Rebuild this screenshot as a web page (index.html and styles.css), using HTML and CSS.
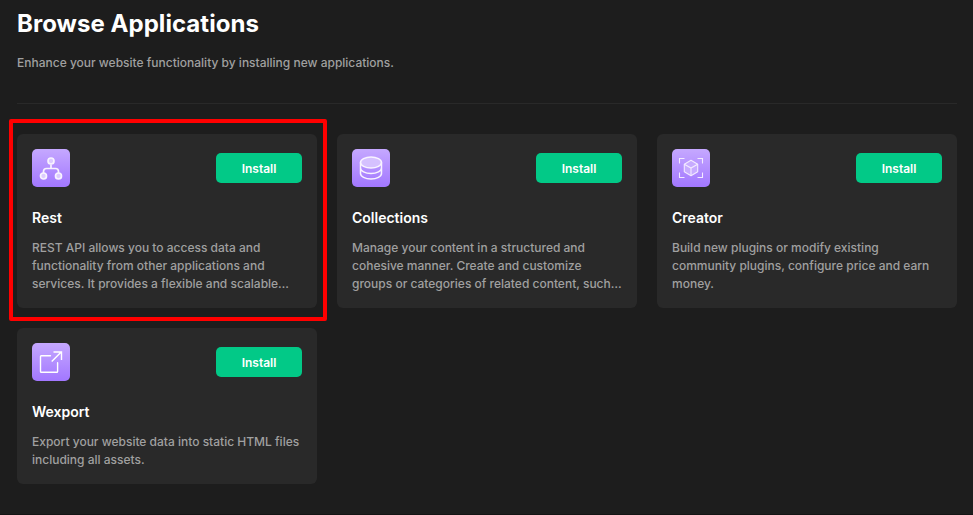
FILE: index.html
```html
<!DOCTYPE html>
<html lang="en">
<head>
<meta charset="utf-8">
<title>Browse Applications</title>
<link rel="stylesheet" href="styles.css">
</head>
<body>
<main class="page">
  <header class="header">
    <h1 class="heading">Browse Applications</h1>
    <p class="lead">Enhance your website functionality by installing new applications.</p>
  </header>
  <section class="grid">
    <article class="card highlighted">
      <div class="top">
        <svg class="icon" viewBox="0 0 38 38"><g fill="#dccbff" stroke="#f8f3ff" stroke-width="1.7"><path fill="none" d="M19 15.500v4M11.500 24.500v-2q0-3 3-3h9q3 0 3 3v2"/><circle cx="19" cy="12" r="3"/><circle cx="11.500" cy="27" r="3"/><circle cx="26.500" cy="27" r="3"/></g></svg>
        <button class="install">Install</button>
      </div>
      <h2 class="name">Rest</h2>
      <p class="desc">REST API allows you to access data and<br>functionality from other applications and<br>services. It provides a flexible and scalable…</p>
    </article>
    <article class="card">
      <div class="top">
        <svg class="icon" viewBox="0 0 38 38"><g fill="none" stroke="#f8f3ff" stroke-width="1.500"><ellipse fill="#d5c1ff" cx="19" cy="13.500" rx="10.500" ry="5.500"/><path d="M8.500 13.500v11c0 3 4.700 5.500 10.500 5.500s10.500-2.500 10.500-5.500v-11M8.500 19c0 3 4.700 5.500 10.500 5.500s10.500-2.500 10.500-5.500"/></g></svg>
        <button class="install">Install</button>
      </div>
      <h2 class="name">Collections</h2>
      <p class="desc">Manage your content in a structured and<br>cohesive manner. Create and customize<br>groups or categories of related content, such…</p>
    </article>
    <article class="card">
      <div class="top">
        <svg class="icon" viewBox="0 0 38 38"><g fill="none" stroke="#f3eaff" stroke-width="1.100"><path d="M12.500 9.500h-5v5M25.500 9.500h5v5M7.500 23.500v5h5M30.500 23.500v5h-5"/><path fill="#c7abff" stroke-linejoin="round" d="M19 11.300l6.700 3.900v7.600L19 26.700l-6.700-3.900v-7.600z"/><path d="M12.300 15.200l6.700 3.900 6.700-3.900M19 19.100v7.600"/></g></svg>
        <button class="install">Install</button>
      </div>
      <h2 class="name">Creator</h2>
      <p class="desc">Build new plugins or modify existing<br>community plugins, configure price and earn<br>money.</p>
    </article>
    <article class="card">
      <div class="top">
        <svg class="icon" viewBox="0 0 38 38"><g fill="none" stroke="#fff" stroke-width="1.400"><path stroke-linecap="round" stroke-linejoin="round" d="M18.500 12.700H9.300q-.8 0-.8.800v15q0 .8.800.8h15.500q.8 0 .8-.8v-8.800"/><path d="M19.700 18.400l9.500-9.500M21.500 9h8v8"/></g></svg>
        <button class="install">Install</button>
      </div>
      <h2 class="name">Wexport</h2>
      <p class="desc">Export your website data into static HTML files<br>including all assets.</p>
    </article>
  </section>
</main>
</body>
</html>
```
FILE: styles.css
```css
* { box-sizing: border-box; }
body {
  margin: 0;
  background: #1d1d1d;
  color: #fff;
  font-family: Inter, sans-serif;
}
.page {
  height: 515px;
  padding: 8px 16px 0 17px;
  border-bottom: 1px solid #141414;
}
.header {
  height: 96px;
  border-bottom: 1px solid #292929;
}
.heading {
  margin: 0;
  font-size: 24px;
  line-height: 32px;
  font-weight: 700;
  letter-spacing: 0.04px;
}
.lead {
  margin: 14px 0 0;
  color: #a0a0a0;
  font-size: 12px;
  line-height: 18px;
  font-weight: 500;
}
.grid {
  display: grid;
  grid-template-columns: repeat(3, 300px);
  gap: 20px;
  margin-top: 30px;
}
.card {
  padding: 15px;
  border-radius: 6px;
  background: #292929;
}
.highlighted {
  position: relative;
}
.highlighted::after {
  content: "";
  position: absolute;
  inset: -15px -10px -13px -8px;
  border: 4px solid #f00;
  border-radius: 2px;
}
.top {
  display: flex;
  align-items: center;
  justify-content: space-between;
}
.icon {
  width: 38px;
  height: 38px;
  border-radius: 5px;
  background: linear-gradient(#c5a8ff, #a277ff);
}
.install {
  width: 86px;
  height: 30px;
  padding: 1px 0 0;
  border: 0;
  border-radius: 5px;
  background: #02c987;
  color: #fff;
  font: 600 12px/29px Inter, sans-serif;
}
.name {
  margin: 21px 0 11px;
  font-size: 14px;
  line-height: 20px;
  font-weight: 600;
}
.desc {
  margin: 0;
  color: #a0a0a0;
  font-size: 12px;
  line-height: 18px;
  font-weight: 500;
  white-space: nowrap;
}
```
